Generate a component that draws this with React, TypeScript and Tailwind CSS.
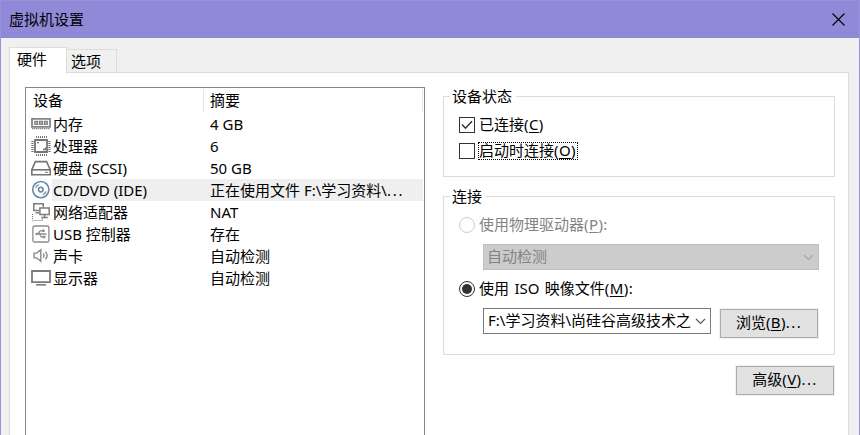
import type { ReactNode } from 'react';

const ICON = 'block shrink-0';

function MemoryIcon() {
  return (
    <svg className={ICON} width="20" height="22" viewBox="0 0 20 22" fill="none" stroke="#858585">
      <path d="M1 5.9h18v8H1z" strokeWidth="1.8" />
      <path d="M3.8 8.3h2.9v3H3.8zM8.6 8.3h2.9v3H8.6zM13.4 8.3h2.9v3h-2.9z" fill="#b5b5b5" strokeWidth="1.2" />
      <path d="M1 15.6h18" strokeWidth="1.4" strokeDasharray="1.4 .6" />
    </svg>
  );
}

function CpuIcon() {
  return (
    <svg className={ICON} width="20" height="22" viewBox="0 0 20 22" fill="none" stroke="#757575">
      <path d="M4 5h12v12H4z" strokeWidth="1.8" />
      <path d="M5 2h11M5 20h11" strokeWidth="2" strokeDasharray="1 1" />
      <path d="M1.5 6v11M18.5 6v11" strokeWidth="2.4" strokeDasharray="1 1" />
      <path d="M6 7.6h2M12 14.5h2.4v-2" strokeWidth="1.4" />
    </svg>
  );
}

function DiskIcon() {
  return (
    <svg className={ICON} width="20" height="22" viewBox="0 0 20 22" fill="none" stroke="#757575" strokeWidth="1.6">
      <path d="M4.4 4.6h11.2l3.6 8v5.2H.8v-5.2z" />
      <path d="M.8 12.8h18.4" />
      <path d="M14.3 15.4h2.4" strokeWidth="1.2" />
    </svg>
  );
}

function DiscIcon() {
  return (
    <svg className={ICON} width="20" height="22" viewBox="0 0 20 22" fill="none">
      <circle cx="9.8" cy="10.6" r="8.1" stroke="#6b89a5" strokeWidth="1.6" />
      <circle cx="9.8" cy="10.6" r="2.3" stroke="#6b89a5" strokeWidth="1.6" />
      <path d="M4.6 8.8a5.4 5.4 0 0 1 3.2-3.2M15 12.4a5.4 5.4 0 0 1-3.2 3.2" stroke="#7c98b1" strokeWidth="1.5" />
    </svg>
  );
}

function NetworkIcon() {
  return (
    <svg className={ICON} width="20" height="22" viewBox="0 0 20 22" fill="none" stroke="#7c7c7c" strokeWidth="1.5">
      <path d="M8.3 9.5H2.8V2.8h9.4v3.6M4.5 11.8h3.8" />
      <path d="M8.9 6.9h9.3v6.6H8.9zM13.5 13.5v2.7M10.2 16.6h6.6" />
      <path d="M1.5 13v6.5M2.5 19.5h9v-2" strokeWidth="1.2" strokeDasharray="1 1" />
    </svg>
  );
}

function UsbIcon() {
  return (
    <svg className={ICON} width="20" height="22" viewBox="0 0 20 22" fill="none" stroke="#8b8b8b" strokeWidth="1.3">
      <rect x="1.9" y="3" width="16" height="16" rx="1.6" />
      <path d="M5 11h10.5M6.8 11l2.4-3.1h2.6M8.4 11l2.1 3h2.2" />
      <path d="M3.8 11l2.4-1.8v3.6zM11.2 6.6h2.4v2.4h-2.4zM12 12.8h2.4v2.4H12z" fill="#8b8b8b" stroke="none" />
    </svg>
  );
}

function SoundIcon() {
  return (
    <svg className={ICON} width="20" height="22" viewBox="0 0 20 22" fill="none" stroke="#8b8b8b" strokeWidth="1.4">
      <path d="M3.1 8.1h2.6l4.1-3.3v11.4l-4.1-3.3H3.1z" />
      <path d="M12.2 8.3c.9 1.3.9 3.1 0 4.4M14.5 6.8c1.9 2.2 1.9 5.2 0 7.4" />
    </svg>
  );
}

function DisplayIcon() {
  return (
    <svg className={ICON} width="20" height="22" viewBox="0 0 20 22" fill="none" stroke="#7c7c7c">
      <path d="M1 4h18v11.2H1z" strokeWidth="1.8" />
      <path d="M5 17.8h10" strokeWidth="1.6" />
    </svg>
  );
}

const devices: { icon: ReactNode; name: string; summary: string; more?: boolean; selected?: boolean }[] = [
  { icon: <MemoryIcon />, name: '内存', summary: '4 GB' },
  { icon: <CpuIcon />, name: '处理器', summary: '6' },
  { icon: <DiskIcon />, name: '硬盘 (SCSI)', summary: '50 GB' },
  { icon: <DiscIcon />, name: 'CD/DVD (IDE)', summary: '正在使用文件 F:\\学习资料\\', more: true, selected: true },
  { icon: <NetworkIcon />, name: '网络适配器', summary: 'NAT' },
  { icon: <UsbIcon />, name: 'USB 控制器', summary: '存在' },
  { icon: <SoundIcon />, name: '声卡', summary: '自动检测' },
  { icon: <DisplayIcon />, name: '显示器', summary: '自动检测' },
];

function Key({ k, tail = '' }: { k: string; tail?: string }) {
  return (
    <span>
      <span className="tracking-[0.4px]">
        (<span className="underline decoration-1 underline-offset-2">{k}</span>)
      </span>
      <span className={tail === '...' ? 'tracking-[1.4px]' : ''}>{tail}</span>
    </span>
  );
}

function Chevron({ color }: { color: string }) {
  return (
    <svg className="block shrink-0" width="11" height="7" viewBox="0 0 11 7" fill="none" stroke={color} strokeWidth="1.1">
      <path d="M1 1l4.5 4.5L10 1" />
    </svg>
  );
}

function Group({ title, className, children }: { title: string; className: string; children: ReactNode }) {
  return (
    <section className={`w-[392px] border border-[#dcdcdc] ${className}`}>
      <div className="-mt-[11px] ml-[6px] h-[22px] w-fit bg-white pr-[4px] pl-[2px] leading-[20px]">{title}</div>
      {children}
    </section>
  );
}

function Button({ children }: { children: ReactNode }) {
  return (
    <button className="flex h-[29px] w-[98px] shrink-0 items-center justify-center whitespace-nowrap border border-[#adadad] bg-[#e1e1e1] pb-[3px] outline outline-[#f0f0f0]">
      {children}
    </button>
  );
}

export default function App() {
  return (
    <div className="flex h-[435px] w-[860px] flex-col overflow-hidden border-x border-[#9993dd] bg-[#f0f0f0] font-['Noto_Sans','Noto_Sans_CJK_SC',sans-serif] text-[15px] leading-[22px] text-black">
      <header className="flex h-[38px] shrink-0 items-center justify-between border-t border-[#9790da] bg-[#9089d8] pr-[14px] pl-[8px]">
        <h1 className="pb-[2px] text-[15px]">虚拟机设置</h1>
        <svg className="block" width="13" height="13" viewBox="0 0 13 13" stroke="#000" strokeWidth="1.1">
          <path d="M.5.5l12 12M12.5.5l-12 12" />
        </svg>
      </header>

      <nav className="mt-[9px] ml-2 flex h-[26px] shrink-0 items-end">
        <div className="z-10 -mb-px h-[27px] w-[58px] border border-b-0 border-[#dcdcdc] bg-white pl-[7px] leading-[22px]">硬件</div>
        <div className="h-[24px] w-[50px] border border-b-0 border-l-0 border-[#dcdcdc] pl-[4px] leading-[22px]">选项</div>
      </nav>

      <main className="-mt-px ml-2 flex h-[380px] w-[840px] shrink-0 items-start border border-[#dcdcdc] bg-white pt-[14px] pl-[15px]">
        <div className="h-[380px] w-[400px] shrink-0 border border-[#828790]">
          <div className="flex h-[25px] py-px leading-[22px]">
            <div className="w-[178px] border-r border-[#e5e5e5] pl-[7px]">设备</div>
            <div className="w-[219px] border-r border-[#e5e5e5] pl-[6px]">摘要</div>
          </div>
          {devices.map((d) => (
            <div key={d.name} className="flex h-[22px] pl-[5px] whitespace-nowrap">
              {d.icon}
              <div className={`ml-px flex w-[371px] ${d.selected ? 'bg-[#efefef]' : ''}`}>
                <span className="w-[157px] pl-px">{d.name}</span>
                <span className="pl-px">
                  {d.summary}
                  {d.more && <span className="tracking-[1.8px]">...</span>}
                </span>
              </div>
            </div>
          ))}
        </div>

        <div className="ml-[18px] flex w-[392px] flex-col pt-[9px]">
          <Group title="设备状态" className="h-[81px]">
            <label className="mt-[8px] flex h-[18px] items-center pl-[15px]">
              <span className="flex size-4 items-center justify-center border border-[#333]">
                <svg width="12" height="10" viewBox="0 0 12 10" fill="none" stroke="#333" strokeWidth="1.5">
                  <path d="M1 4.5l3.5 3.7L11 1.2" />
                </svg>
              </span>
              <span className="ml-[4px] pb-[2px]">已连接<Key k="C" /></span>
            </label>
            <label className="mt-[8px] flex h-[18px] items-center pl-[15px]">
              <span className="size-4 border border-[#333]" />
              <span className="ml-[3px] flex h-[18px] w-[100px] items-center whitespace-nowrap border border-dotted border-black">
                <span className="pb-[2px]">启动时连接<Key k="O" /></span>
              </span>
            </label>
          </Group>

          <Group title="连接" className="mt-[19px] h-[159px]">
            <label className="mt-[8px] flex h-[18px] items-center pl-[15px] text-[#838383]">
              <span className="size-4 rounded-full border border-[#ccc]" />
              <span className="ml-[4px] pb-[2px]">使用物理驱动器<Key k="P" tail=":" /></span>
            </label>
            <div className="mt-[10px] ml-[39px] flex h-[26px] w-[336px] items-center justify-between border border-[#bfbfbf] bg-[#ccc] pr-[4px] pl-[3px] text-[#838383]">
              <span className="pb-[2px]">自动检测</span>
              <Chevron color="#a3a3a3" />
            </div>
            <label className="mt-[10px] flex h-[18px] items-center pl-[15px]">
              <span className="flex size-4 items-center justify-center rounded-full border border-[#333]">
                <span className="size-[10px] rounded-full bg-[#333]" />
              </span>
              <span className="ml-[4px] pb-[2px] [word-spacing:1.5px]">使用 ISO 映像文件<Key k="M" tail=":" /></span>
            </label>
            <div className="mt-[10px] ml-[39px] flex">
              <div className="flex h-[26px] w-[228px] shrink-0 items-center justify-between border border-[#7a7a7a] bg-white pr-[4px] pl-[4px]">
                <span className="pb-[2px] whitespace-nowrap">F:\学习资料\尚硅谷高级技术之</span>
                <Chevron color="#555" />
              </div>
              <div className="mt-px ml-[9px]">
                <Button><span>浏览<Key k="B" tail="..." /></span></Button>
              </div>
            </div>
          </Group>

          <div className="mt-[11px] mr-px flex justify-end">
            <Button><span>高级<Key k="V" tail="..." /></span></Button>
          </div>
        </div>
      </main>
    </div>
  );
}
